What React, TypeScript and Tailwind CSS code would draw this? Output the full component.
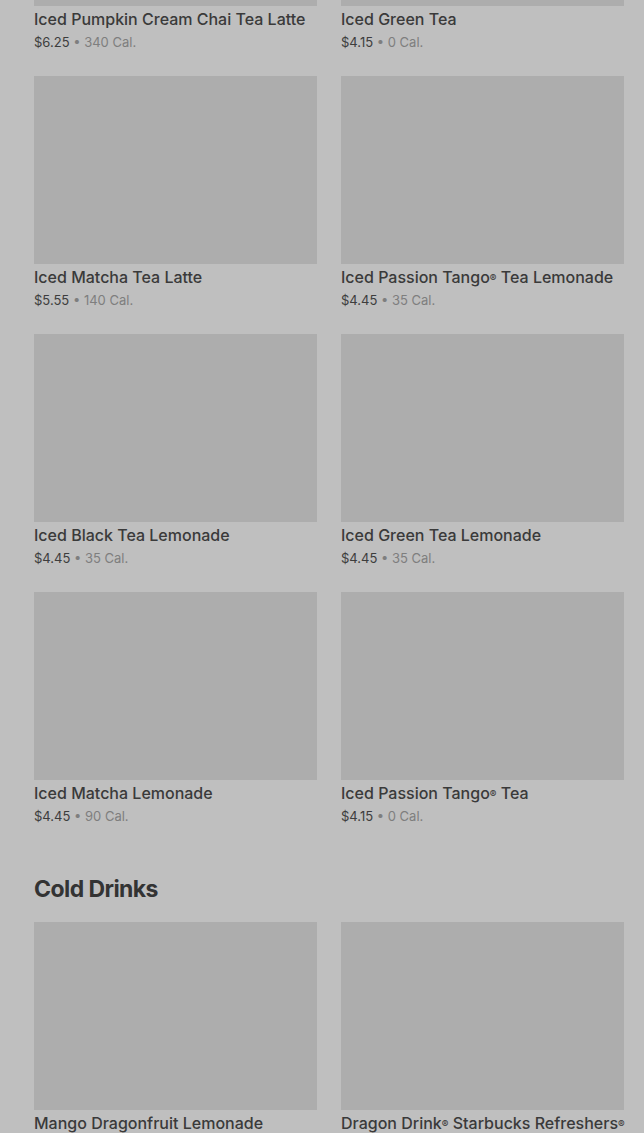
import React from 'react';

type Item = { name: React.ReactNode; price: string; cal: string };

const R = () => <sup className="text-[10px] relative -top-[1px]">®</sup>;

const teas: Item[] = [
  { name: 'Iced Pumpkin Cream Chai Tea Latte', price: '$6.25', cal: '340 Cal.' },
  { name: 'Iced Green Tea', price: '$4.15', cal: '0 Cal.' },
  { name: 'Iced Matcha Tea Latte', price: '$5.55', cal: '140 Cal.' },
  { name: <>Iced Passion Tango<R /> Tea Lemonade</>, price: '$4.45', cal: '35 Cal.' },
  { name: 'Iced Black Tea Lemonade', price: '$4.45', cal: '35 Cal.' },
  { name: 'Iced Green Tea Lemonade', price: '$4.45', cal: '35 Cal.' },
  { name: 'Iced Matcha Lemonade', price: '$4.45', cal: '90 Cal.' },
  { name: <>Iced Passion Tango<R /> Tea</>, price: '$4.15', cal: '0 Cal.' },
];

const cold: Item[] = [
  { name: 'Mango Dragonfruit Lemonade', price: '$5.25', cal: '140 Cal.' },
  { name: <>Dragon Drink<R /> Starbucks Refreshers<R /></>, price: '$5.25', cal: '130 Cal.' },
];

const Card: React.FC<{ item: Item }> = ({ item }) => (
  <div className="flex flex-col">
    <div className="h-[188px] bg-[#adadad]" />
    <div className="mt-[3px] text-[16px] leading-5 font-medium text-[#3a3a3a] whitespace-nowrap">{item.name}</div>
    <div className="mt-1 text-[13px] leading-[18px] text-[#3d3d3d]">
      {item.price} <span className="text-[#7e7e7e]">• {item.cal}</span>
    </div>
  </div>
);

export default function App() {
  return (
    <div
      className="bg-[#bfbfbf] pl-[34px] pr-[20px] overflow-hidden h-[1133px]"
      style={{ fontFamily: 'Inter, "Liberation Sans", sans-serif' }}
    >
      <div className="grid grid-cols-2 gap-x-6 gap-y-[25px] -mt-[182px]">
        {teas.map((t, i) => (
          <Card key={i} item={t} />
        ))}
      </div>
      <h2 className="mt-12 text-[23px] leading-8 font-bold tracking-tight text-[#333]">Cold Drinks</h2>
      <div className="grid grid-cols-2 gap-x-6 gap-y-[25px] mt-[17px]">
        {cold.map((t, i) => (
          <Card key={i} item={t} />
        ))}
      </div>
    </div>
  );
}
